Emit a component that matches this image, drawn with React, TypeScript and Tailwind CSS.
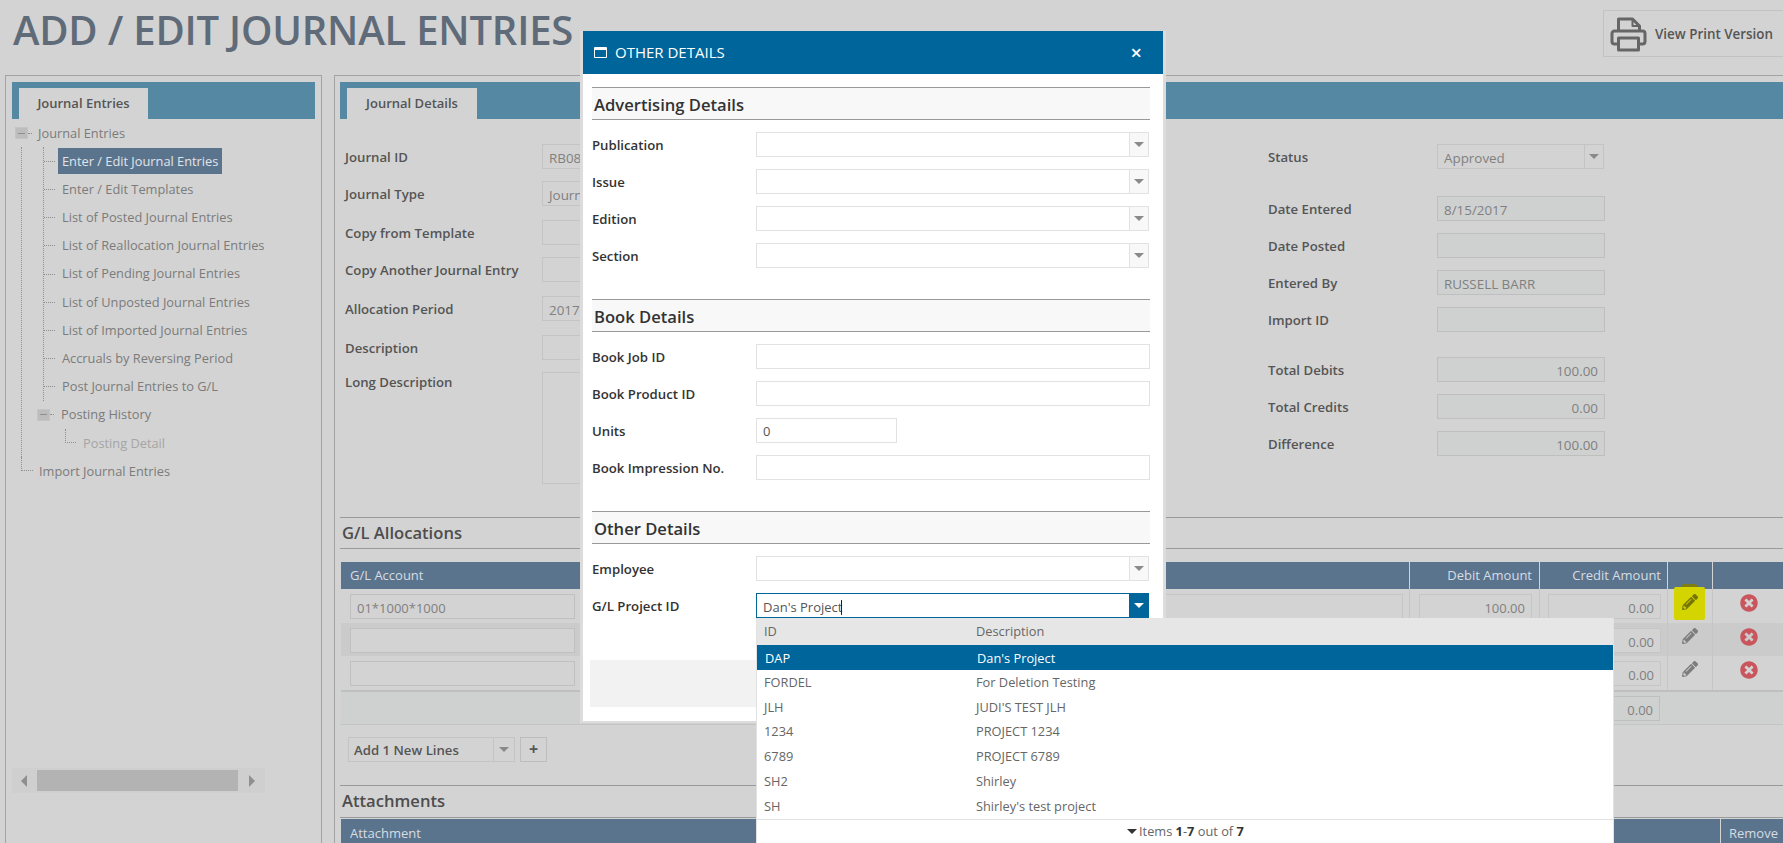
import { FaPencilAlt, FaTimesCircle } from 'react-icons/fa';

const treeItems = [
  'Enter / Edit Templates',
  'List of Posted Journal Entries',
  'List of Reallocation Journal Entries',
  'List of Pending Journal Entries',
  'List of Unposted Journal Entries',
  'List of Imported Journal Entries',
  'Accruals by Reversing Period',
  'Post Journal Entries to G/L',
];

const projects = [
  ['FORDEL', 'For Deletion Testing'],
  ['JLH', "JUDI'S TEST JLH"],
  ['1234', 'PROJECT 1234'],
  ['6789', 'PROJECT 6789'],
  ['SH2', 'Shirley'],
  ['SH', "Shirley's test project"],
];

function Caret({ className = 'border-t-[#8a8a8a]' }: { className?: string }) {
  return <span className={`block h-0 w-0 border-x-[5px] border-t-[5px] border-x-transparent ${className}`} />;
}

function Connector({ className = 'w-[11px]' }: { className?: string }) {
  return <span className={`block border-t border-dotted border-[#8f8f8f] ${className}`} />;
}

// Dotted elbow for the last child of a tree branch
function Elbow({ className = 'w-[12px]' }: { className?: string }) {
  return <span className={`mb-[14px] block h-[14px] border-b border-l border-dotted border-[#8f8f8f] ${className}`} />;
}

function Expander() {
  return (
    <span className="flex h-[12px] w-[13px] shrink-0 items-center justify-center border border-[#c4c4c4] bg-[#bdbdbd]">
      <span className="block h-px w-[7px] bg-[#8f8f8f]" />
    </span>
  );
}

// Dimmed page field, read only behind the modal
function PageField({ label, value, right = false, select = false }: { label: string; value?: string; right?: boolean; select?: boolean }) {
  return (
    <div className="flex">
      <span className="w-[169px] shrink-0 pt-[4px] text-[13.2px] font-semibold text-[#555]">{label}</span>
      {select ? (
        <div className="flex h-[25px] w-[167px] border border-[#c4c4c4] bg-[#d3d3d3]">
          <span className="flex-1 pl-[6px] pt-[3px] text-[13.4px] text-[#808080]">{value}</span>
          <span className="flex w-[19px] items-center justify-center border-l border-[#c4c4c4]"><Caret /></span>
        </div>
      ) : (
        <div className={`h-[25px] w-[168px] border border-[#bfbfbf] bg-[#cfd1d0] px-[6px] pt-[3px] text-[13.4px] text-[#808080] ${right ? 'text-right' : ''}`}>{value}</div>
      )}
    </div>
  );
}

function LeftField({ label, value, className = 'h-[25px]', labelClass = 'pt-[4px]' }: { label: string; value?: string; className?: string; labelClass?: string }) {
  return (
    <div className="flex">
      <span className={`w-[197px] shrink-0 text-[13.2px] font-semibold text-[#555] ${labelClass}`}>{label}</span>
      <div className={`w-[400px] border border-[#c4c4c4] bg-[#d3d3d3] pl-[6px] pt-[3px] text-[13.4px] text-[#808080] ${className}`}>{value}</div>
    </div>
  );
}

function SectionTitle({ children, className = '' }: { children: string; className?: string }) {
  return (
    <div className={`flex items-center border-y border-[#9a9a9a] bg-[#d3d3d3] pl-[2px] pt-[1px] text-[16.6px] font-semibold text-[#4d4d4d] ${className}`}>{children}</div>
  );
}

function ModalTitle({ children, className = '' }: { children: string; className?: string }) {
  return (
    <div className={`flex h-[33px] w-[558px] items-center border-y border-[#999] bg-[#f8f8f8] pl-[2px] pt-[3px] text-[16.6px] font-semibold text-[#333] ${className}`}>{children}</div>
  );
}

function ModalSelect({ label }: { label: string }) {
  return (
    <div className="mt-[12px] flex">
      <span className="w-[164px] shrink-0 pt-[4px] text-[13.2px] font-semibold text-[#333]">{label}</span>
      <div className="flex h-[25px] w-[393px] border border-[#e2e2e2] bg-white">
        <span className="flex-1" />
        <span className="flex w-[19px] items-center justify-center border-l border-[#e2e2e2] bg-[#f8f8f8]"><Caret /></span>
      </div>
    </div>
  );
}

function ModalInput({ label, value, className = 'w-[394px]' }: { label: string; value?: string; className?: string }) {
  return (
    <div className="mt-[12px] flex">
      <span className="w-[164px] shrink-0 pt-[4px] text-[13.2px] font-semibold text-[#333]">{label}</span>
      <div className={`h-[25px] border border-[#e2e2e2] bg-white pl-[6px] pt-[3px] text-[13px] text-[#555] ${className}`}>{value}</div>
    </div>
  );
}

function GridRow({ account, debit, credit, striped = false, marked = false }: { account?: string; debit?: string; credit: string; striped?: boolean; marked?: boolean }) {
  return (
    <div className={`grid h-[33.5px] grid-cols-[250px_818px_130px_128px_45px_73px] ${striped ? 'bg-[#cbcbcb]' : 'bg-[#d3d3d3]'}`}>
      <div className="pl-[9px] pt-[5px]">
        <div className="h-[25px] w-[225px] border border-[#c0c0c0] bg-[#d3d3d3] pl-[6px] pt-[4px] text-[13px] text-[#808080]">{account}</div>
      </div>
      <div className="pr-[6px] pt-[5px]">
        <div className="h-[25px] border border-[#c6c6c6] bg-[#d3d3d3]" />
      </div>
      <div className="border-l border-[#c6c6c6] pl-[9px] pt-[5px]">
        <div className="h-[25px] w-[113px] border border-[#c6c6c6] bg-[#d3d3d3] pr-[6px] pt-[4px] text-right text-[13px] text-[#808080]">{debit ?? '0.00'}</div>
      </div>
      <div className="border-l border-[#c6c6c6] pl-[8px] pt-[5px]">
        <div className="h-[25px] w-[113px] border border-[#c6c6c6] bg-[#d3d3d3] pr-[6px] pt-[4px] text-right text-[13px] text-[#808080]">{credit}</div>
      </div>
      <div className="relative flex justify-center border-l border-[#c6c6c6] pt-[5px]">
        {marked && <span className="absolute left-[14px] top-[-5px] h-[4px] w-[15px] rounded-t-[2px] bg-[#7d7d14]" />}
        {marked && <span className="absolute left-[6px] top-[-2px] h-[33px] w-[31px] rounded-[2px] bg-[#d4d400]" />}
        <FaPencilAlt className={`relative h-[16px] w-[16px] ${marked ? 'text-[#75750a]' : 'text-[#7d7d7d]'}`} />
      </div>
      <div className="flex justify-center border-l border-[#c6c6c6] pt-[5px]">
        <FaTimesCircle className="h-[18px] w-[18px] text-[#c9565c]" />
      </div>
    </div>
  );
}

export default function App() {
  return (
    <div className="relative h-[843px] w-[1783px] overflow-hidden bg-[#d3d3d3] font-['Open_Sans',sans-serif]">
      {/* Page header */}
      <header className="flex h-[75px] items-start justify-between">
        <h1 className="ml-[13px] mt-[5px] text-[40px] font-semibold leading-[50px] tracking-[-0.2px] text-[#5f6b78]">ADD / EDIT JOURNAL ENTRIES</h1>
        <button className="mr-[-10px] mt-[10px] flex h-[47px] w-[190px] items-center border border-[#c2c2c2] pl-[6px]">
          <svg viewBox="0 0 36 36" className="h-[36px] w-[37px]" fill="none" stroke="#666" strokeWidth="3" strokeLinejoin="round">
            <path d="M8 15V3h14l7 7v5" />
            <path d="M22 3v7h7" strokeWidth="2" />
            <path d="M8 28H4a2.5 2.5 0 0 1-2.5-2.5V17.500A2.500 2.500 0 0 1 4 15h28a2.500 2.500 0 0 1 2.500 2.500v8A2.500 2.500 0 0 1 32 28h-4" />
            <path d="M8 22h20v12H8z" />
          </svg>
          <span className="ml-[8px] pt-[2px] text-[13.4px] font-semibold text-[#555]">View Print Version</span>
        </button>
      </header>

      <div className="flex pl-[5px]">
        {/* Tree panel */}
        <aside className="h-[768px] w-[317px] shrink-0 border-x border-t border-[#a3a3a3] px-[6px] pt-[6px]">
          <div className="flex h-[37px] items-end bg-[#5488a3] pl-[7px]">
            <div className="flex h-[31px] w-[129px] items-center justify-center bg-[#d3d3d3] pt-[1px] text-[13px] font-semibold text-[#555]">Journal Entries</div>
          </div>
          <nav className="text-[12.8px] text-[#7b7b7b]">
            <div className="flex h-[28.2px] items-center pl-[3px]">
              <Expander />
              <Connector className="w-[4px]" />
              <span className="ml-[6px]">Journal Entries</span>
            </div>
            <div className="ml-[9px] border-l border-dotted border-[#8f8f8f]">
              <div className="ml-[21px] border-l border-dotted border-[#8f8f8f]">
                <div className="flex h-[28.2px] items-center">
                  <Connector />
                  <span className="ml-[3px] flex h-[26px] items-center bg-[#5b748e] px-[4px] text-[#e0e4e8]">Enter / Edit Journal Entries</span>
                </div>
                {treeItems.map(item => (
                  <div key={item} className="flex h-[28.2px] items-center">
                    <Connector />
                    <span className="ml-[7px]">{item}</span>
                  </div>
                ))}
              </div>
              <div className="flex h-[28.2px] items-center pl-[15px]">
                <Expander />
                <Connector className="w-[4px]" />
                <span className="ml-[7px]">Posting History</span>
              </div>
              <div className="flex h-[28.2px] items-center pl-[43px] text-[#a5a5a5]">
                <Elbow className="w-[11px]" />
                <span className="ml-[7px]">Posting Detail</span>
              </div>
            </div>
            <div className="flex h-[28.2px] items-center pl-[9px]">
              <Elbow />
              <span className="ml-[6px]">Import Journal Entries</span>
            </div>
          </nav>
          <div className="mt-[283px] flex h-[25px] w-[253px] items-center bg-[#cfcfcf]">
            <span className="ml-[9px] block h-0 w-0 border-y-[6px] border-r-[6px] border-y-transparent border-r-[#8f8f8f]" />
            <span className="ml-[10px] block h-[21px] w-[201px] bg-[#b3b3b3]" />
            <span className="ml-[11px] block h-0 w-0 border-y-[6px] border-l-[6px] border-y-transparent border-l-[#8f8f8f]" />
          </div>
        </aside>

        {/* Details panel */}
        <main className="ml-[12px] h-[768px] flex-1 border-l border-t border-[#a3a3a3] pl-[5px] pt-[6px]">
          <div className="flex h-[37px] items-end bg-[#5488a3] pl-[7px]">
            <div className="flex h-[31px] w-[130px] items-center justify-center bg-[#d3d3d3] pt-[1px] text-[13px] font-semibold text-[#555]">Journal Details</div>
          </div>

          <div className="flex h-[398px] pl-[5px] pt-[25px]">
            <div className="flex w-[923px] shrink-0 flex-col">
              <LeftField label="Journal ID" value="RB081" />
              <div className="mt-[12px]"><LeftField label="Journal Type" value="Journal" /></div>
              <div className="mt-[14px]"><LeftField label="Copy from Template" /></div>
              <div className="mt-[12px]"><LeftField label="Copy Another Journal Entry" /></div>
              <div className="mt-[14px]"><LeftField label="Allocation Period" value="2017-08" /></div>
              <div className="mt-[14px]"><LeftField label="Description" /></div>
              <div className="mt-[12px]"><LeftField label="Long Description" className="h-[112px]" labelClass="pt-[1px]" /></div>
            </div>
            <div className="flex flex-col">
              <PageField label="Status" value="Approved" select />
              <div className="mt-[27px]"><PageField label="Date Entered" value="8/15/2017" /></div>
              <div className="mt-[12px]"><PageField label="Date Posted" /></div>
              <div className="mt-[12px]"><PageField label="Entered By" value="RUSSELL BARR" /></div>
              <div className="mt-[12px]"><PageField label="Import ID" /></div>
              <div className="mt-[25px]"><PageField label="Total Debits" value="100.00" right /></div>
              <div className="mt-[12px]"><PageField label="Total Credits" value="0.00" right /></div>
              <div className="mt-[12px]"><PageField label="Difference" value="100.00" right /></div>
            </div>
          </div>

          <SectionTitle className="h-[32px]">G/L Allocations</SectionTitle>

          <div className="ml-px mt-[13px]">
            <div className="grid h-[27px] grid-cols-[250px_818px_130px_128px_45px_73px] bg-[#5b748e] text-[13px] text-[#d6dce2]">
              <span className="flex items-center pl-[9px]">G/L Account</span>
              <span />
              <span className="flex items-center justify-end border-l border-[#d3d3d3] pr-[7px]">Debit Amount</span>
              <span className="flex items-center justify-end border-l border-[#d3d3d3] pr-[6px]">Credit Amount</span>
              <span className="border-l border-[#d3d3d3]" />
              <span className="border-l border-[#d3d3d3]" />
            </div>
            <GridRow account="01*1000*1000" debit="100.00" credit="0.00" marked />
            <GridRow credit="0.00" striped />
            <GridRow credit="0.00" />
            <div className="flex h-[34px] justify-start border-t-2 border-[#bfbfbf] bg-[#cfd1d0] pl-[1206px] pt-[4px]">
              <div className="h-[25px] w-[113px] border border-[#bfbfbf] pr-[6px] pt-[4px] text-right text-[13px] text-[#808080]">0.00</div>
            </div>
          </div>

          <div className="h-[61px] border-t border-[#c4c4c4] pl-[8px] pt-[12px]">
            <div className="flex">
              <div className="flex h-[25px] w-[167px] border border-[#c4c4c4]">
                <span className="flex-1 pl-[5px] pt-[3px] text-[13.2px] font-semibold text-[#555]">Add 1 New Lines</span>
                <span className="flex w-[21px] items-center justify-center border-l border-[#c4c4c4]"><Caret /></span>
              </div>
              <div className="ml-[5px] flex h-[25px] w-[27px] items-center justify-center border border-[#bdbdbd] text-[16px] font-bold leading-none text-[#555]">+</div>
            </div>
          </div>

          <SectionTitle className="h-[33px]">Attachments</SectionTitle>
          <div className="ml-px mt-[1px] flex h-[30px] bg-[#5b748e] text-[13px] text-[#d6dce2]">
            <span className="flex flex-1 items-center pl-[9px]">Attachment</span>
            <span className="flex w-[65px] items-center border-l border-[#d3d3d3] pl-[8px]">Remove</span>
          </div>
        </main>
      </div>

      {/* Other details modal */}
      <div className="absolute left-[580px] top-[31px] w-[586px] border-x-[3px] border-b-[2px] border-[#dcdcdc] bg-white">
        <div className="flex h-[43px] items-center bg-[#00659a] pl-[11px] pr-[21px] text-white">
          <svg viewBox="0 0 13 11" className="h-[11px] w-[13px]" fill="none" stroke="#fff">
            <path d="M.5.500h12v10H.500z" />
            <path d="M1 2h11" strokeWidth="2" />
          </svg>
          <span className="ml-[8px] text-[15px] leading-none">OTHER DETAILS</span>
          <span className="ml-auto text-[20px] font-semibold leading-none">×</span>
        </div>
        <div className="pb-[14px] pl-[9px] pr-[13px] pt-[13px]">
          <ModalTitle>Advertising Details</ModalTitle>
          <ModalSelect label="Publication" />
          <ModalSelect label="Issue" />
          <ModalSelect label="Edition" />
          <ModalSelect label="Section" />
          <ModalTitle className="mt-[31px]">Book Details</ModalTitle>
          <ModalInput label="Book Job ID" />
          <ModalInput label="Book Product ID" />
          <ModalInput label="Units" value="0" className="w-[141px]" />
          <ModalInput label="Book Impression No." />
          <ModalTitle className="mt-[31px]">Other Details</ModalTitle>
          <ModalSelect label="Employee" />
          <div className="mt-[12px] flex">
            <span className="w-[164px] shrink-0 pt-[4px] text-[13.2px] font-semibold text-[#333]">G/L Project ID</span>
            <div className="flex h-[25px] w-[393px] border border-[#00659a] bg-white">
              <span className="flex-1 pl-[6px] pt-[3px] text-[13px] text-[#555]">Dan's Project<span className="ml-[-1px] inline-block h-[15px] w-px translate-y-[3px] bg-[#222]" /></span>
              <span className="flex w-[19px] items-center justify-center bg-[#00659a]"><Caret className="border-t-white" /></span>
            </div>
          </div>
          <div className="ml-[-2px] mt-[42px] h-[47px] bg-[#f2f2f2]" />
        </div>
      </div>

      {/* Project dropdown */}
      <div className="absolute left-[756px] top-[618px] w-[858px] border-x border-[#e2e2e2] bg-white text-[12.8px] text-[#666]">
        <div className="grid h-[27px] grid-cols-[212px_1fr] items-center bg-[#e6e6e6] pl-[7px] pt-[1px]">
          <span>ID</span>
          <span>Description</span>
        </div>
        <div className="grid h-[25px] grid-cols-[212px_1fr] items-center bg-[#00659a] pl-[8px] pt-[2px] text-white">
          <span>DAP</span>
          <span>Dan's Project</span>
        </div>
        {projects.map(([id, description]) => (
          <div key={id} className="grid h-[24.8px] grid-cols-[212px_1fr] items-center pl-[7px]">
            <span>{id}</span>
            <span>{description}</span>
          </div>
        ))}
        <div className="flex h-[25px] items-center justify-start border-y border-[#e2e2e2] pl-[370px]">
          <Caret className="border-t-[#333]" />
          <span className="ml-[2px]">Items <b className="text-[#333]">1</b>-<b className="text-[#333]">7</b> out of <b className="text-[#333]">7</b></span>
        </div>
      </div>
    </div>
  );
}
